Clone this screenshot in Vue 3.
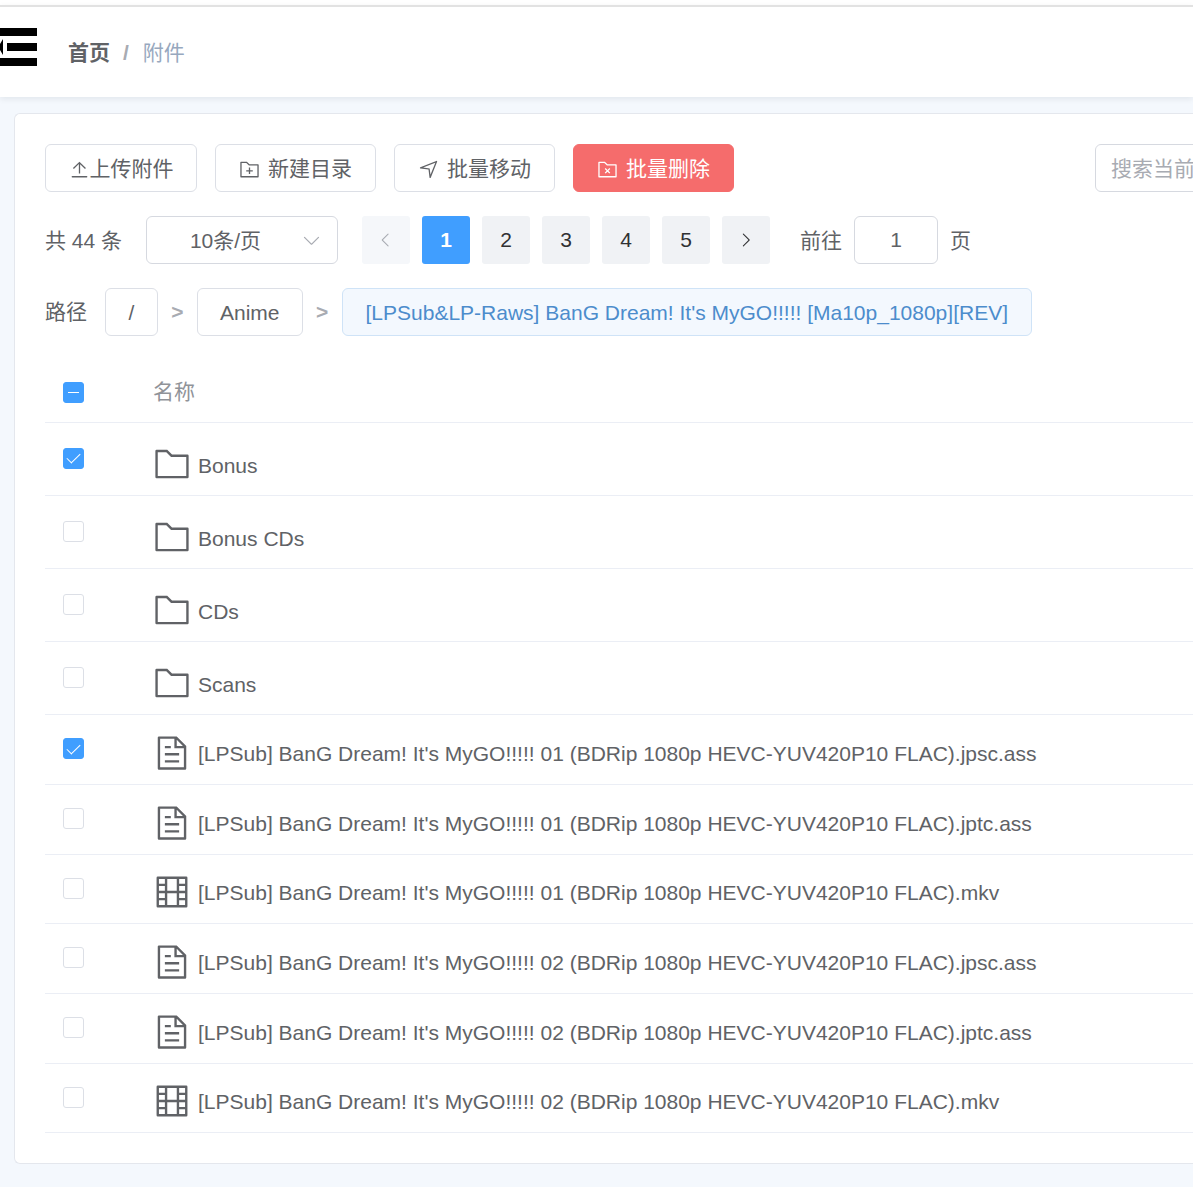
<script setup>
import { ref, computed } from 'vue'

const folder = 'M128 192v640h768V320H485.76L357.504 192zm-32-64h287.872l128.384 128H928a32 32 0 0 1 32 32v576a32 32 0 0 1-32 32H96a32 32 0 0 1-32-32V160a32 32 0 0 1 32-32'
const icons = {
  folder,
  folderAdd: folder + 'm384 416V416h64v128h128v64H544v128h-64V608H352v-64z',
  folderDelete: folder + 'm370.752 448-90.496-90.496 45.248-45.248L512 530.752l90.496-90.496 45.248 45.248L557.248 576l90.496 90.496-45.248 45.248L512 621.248l-90.496 90.496-45.248-45.248z',
  document: 'M832 384H576V128H192v768h640zm-26.496-64L640 154.496V320zM160 64h480l256 256v608a32 32 0 0 1-32 32H160a32 32 0 0 1-32-32V96a32 32 0 0 1 32-32m160 448h384v64H320zm0-192h160v64H320zm0 384h384v64H320z',
  film: 'M160 160v704h704V160zm-32-64h768a32 32 0 0 1 32 32v768a32 32 0 0 1-32 32H128a32 32 0 0 1-32-32V128a32 32 0 0 1 32-32M320 288V128h64v352h256V128h64v160h160v64H704v128h160v64H704v128h160v64H704v160h-64V544H384v352h-64V736H128v-64h192V544H128v-64h192V352H128v-64z',
  upload: 'M160 832h704a32 32 0 1 1 0 64H160a32 32 0 1 1 0-64m384-578.304V704h-64V247.296L237.248 490.048 192 444.8 508.8 128l316.8 316.8-45.312 45.248z',
  position: 'm249.6 417.088 319.744 43.072 39.168 310.272L845.12 178.88zm-129.024 47.168a32 32 0 0 1-7.68-61.44l777.792-311.04a32 32 0 0 1 41.6 41.6l-310.72 775.68a32 32 0 0 1-61.44-7.808L512 516.992z',
  down: 'M831.872 340.864 512 652.672 192.128 340.864a30.59 30.59 0 0 0-42.752 0 29.12 29.12 0 0 0 0 41.6L489.664 714.24a32 32 0 0 0 44.672 0l340.288-331.712a29.12 29.12 0 0 0 0-41.728 30.59 30.59 0 0 0-42.752 0z',
  left: 'M609.408 149.376 277.76 489.6a32 32 0 0 0 0 44.672l331.648 340.352a29.12 29.12 0 0 0 41.728 0 30.59 30.59 0 0 0 0-42.752L339.264 511.936l311.872-319.872a30.59 30.59 0 0 0 0-42.688 29.12 29.12 0 0 0-41.728 0z',
  right: 'M340.864 149.312a30.59 30.59 0 0 0 0 42.752L652.736 512 340.864 831.872a30.59 30.59 0 0 0 0 42.752 29.12 29.12 0 0 0 41.728 0L714.24 534.336a32 32 0 0 0 0-44.672L382.592 149.376a29.12 29.12 0 0 0-41.728 0z',
}

const page = ref(1)
const show = "[LPSub] BanG Dream! It's MyGO!!!!! "
const spec = ' (BDRip 1080p HEVC-YUV420P10 FLAC)'
const rows = ref([
  { name: 'Bonus', type: 'folder', checked: true },
  { name: 'Bonus CDs', type: 'folder', checked: false },
  { name: 'CDs', type: 'folder', checked: false },
  { name: 'Scans', type: 'folder', checked: false },
  { name: show + '01' + spec + '.jpsc.ass', type: 'document', checked: true },
  { name: show + '01' + spec + '.jptc.ass', type: 'document', checked: false },
  { name: show + '01' + spec + '.mkv', type: 'film', checked: false },
  { name: show + '02' + spec + '.jpsc.ass', type: 'document', checked: false },
  { name: show + '02' + spec + '.jptc.ass', type: 'document', checked: false },
  { name: show + '02' + spec + '.mkv', type: 'film', checked: false },
])
const all = computed(() => rows.value.every((r) => r.checked))
const some = computed(() => !all.value && rows.value.some((r) => r.checked))
function toggleAll(e) {
  rows.value.forEach((r) => { r.checked = e.target.checked })
}
</script>

<template>
  <div class="page">
    <header class="topbar">
      <button class="fold" type="button" aria-label="折叠菜单">
        <svg viewBox="0 0 37 38" aria-hidden="true"><path d="M0 0h37v8H0zM7 15h30v8H7zM0 30h37v8H0zM3 11v16L0 22v-6z" /></svg>
      </button>
      <nav class="crumbs">
        <a href="#">首页</a><span class="slash">/</span><span class="here">附件</span>
      </nav>
    </header>

    <main class="card">
      <div class="toolbar">
        <button class="btn tight" type="button"><svg class="icon" viewBox="0 0 1024 1024"><path :d="icons.upload" /></svg>上传附件</button>
        <button class="btn" type="button"><svg class="icon" viewBox="0 0 1024 1024"><path :d="icons.folderAdd" /></svg>新建目录</button>
        <button class="btn" type="button"><svg class="icon" viewBox="0 0 1024 1024"><path :d="icons.position" /></svg>批量移动</button>
        <button class="btn danger" type="button"><svg class="icon" viewBox="0 0 1024 1024"><path :d="icons.folderDelete" /></svg>批量删除</button>
        <div class="search"><input type="text" placeholder="搜索当前目录" aria-label="搜索当前目录"></div>
      </div>

      <div class="pagination">
        <span class="total">共 44 条</span>
        <div class="size">
          <select aria-label="每页条数"><option>10条/页</option></select>
          <svg class="icon" viewBox="0 0 1024 1024"><path :d="icons.down" /></svg>
        </div>
        <div class="pager">
          <button type="button" disabled aria-label="上一页"><svg class="arrow" viewBox="0 0 1024 1024"><path :d="icons.left" /></svg></button>
          <button v-for="n in 5" :key="n" type="button" :class="{ active: n === page }" @click="page = n">{{ n }}</button>
          <button type="button" aria-label="下一页"><svg class="arrow" viewBox="0 0 1024 1024"><path :d="icons.right" /></svg></button>
        </div>
        <label class="jump"><span>前往</span><input v-model.number="page" type="text"><span>页</span></label>
      </div>

      <nav class="path">
        <span class="label">路径</span>
        <button class="btn" type="button">/</button>
        <span class="sep">&gt;</span>
        <button class="btn" type="button">Anime</button>
        <span class="sep">&gt;</span>
        <button class="btn current" type="button">[LPSub&amp;LP-Raws] BanG Dream! It's MyGO!!!!! [Ma10p_1080p][REV]</button>
      </nav>

      <table>
        <thead>
          <tr>
            <th class="pick"><input type="checkbox" aria-label="全选" :checked="all" :indeterminate="some" @change="toggleAll"></th>
            <th>名称</th>
          </tr>
        </thead>
        <tbody>
          <tr v-for="row in rows" :key="row.name" :class="row.type">
            <td class="pick"><input v-model="row.checked" type="checkbox" :aria-label="row.name"></td>
            <td>
              <div class="name">
                <svg viewBox="0 0 1024 1024" aria-hidden="true"><path :d="icons[row.type]" /></svg>
                <span>{{ row.name }}</span>
              </div>
            </td>
          </tr>
        </tbody>
      </table>
    </main>
  </div>
</template>

<style>
body {
  margin: 0;
  background: #f4f8fd;
}
</style>

<style scoped>
* {
  box-sizing: border-box;
}
.page {
  color: #606266;
  font: 21px/32px "Liberation Sans", "Noto Sans CJK SC", sans-serif;
  border-top: 5px solid #fff;
}
button,
input,
select {
  font: inherit;
  color: inherit;
  margin: 0;
}
svg {
  fill: currentColor;
  flex: none;
}
.topbar {
  display: flex;
  align-items: center;
  height: 92px;
  border-top: 2px solid #e2e2e2;
  background: #fff;
  box-shadow: 0 2px 6px rgba(0, 21, 41, 0.08);
}
.fold {
  display: flex;
  padding: 0 0 10px;
  border: 0;
  background: none;
  color: #000;
}
.fold svg {
  width: 37px;
  height: 38px;
}
.crumbs {
  display: flex;
  padding: 2px 0 0 31px;
}
.crumbs a {
  color: #606266;
  font-weight: 700;
  text-decoration: none;
}
.slash {
  margin: 0 14px 0 13px;
  color: #a8abb2;
  font-weight: 700;
}
.here {
  color: #97a8be;
}
.card {
  margin: 16px 0 23px 14px;
  padding: 30px 0 30px 30px;
  border: 1px solid #e4e7ed;
  border-right: 0;
  border-radius: 6px 0 0 6px;
  background: #fff;
}
.toolbar {
  display: flex;
  gap: 18px;
}
.btn {
  display: flex;
  align-items: center;
  justify-content: center;
  gap: 8px;
  height: 48px;
  min-width: 161px;
  padding: 2px 22px 0;
  border: 1px solid #dcdfe6;
  border-radius: 6px;
  background: #fff;
  white-space: nowrap;
}
.icon {
  width: 21px;
  height: 21px;
}
.tight {
  gap: 0;
  min-width: 152px;
}
.danger {
  border-color: #f56c6c;
  background: #f56c6c;
  color: #fff;
}
.search {
  width: 98px;
  margin-left: auto;
  overflow: hidden;
}
.search input {
  width: 300px;
  height: 48px;
  padding: 2px 15px 0;
  border: 1px solid #d6d9e0;
  border-radius: 6px;
  background: #fff;
}
.search input::placeholder {
  color: #a8abb2;
}
.pagination {
  display: flex;
  align-items: center;
  gap: 24px;
  margin-top: 24px;
}
.total,
.jump span {
  padding-top: 1px;
}
.size {
  display: flex;
  align-items: center;
  width: 192px;
  height: 48px;
  padding: 1px 15px 0 3px;
  border: 1px solid #d6d9e0;
  border-radius: 6px;
}
.size select {
  flex: 1;
  height: 44px;
  border: 0;
  appearance: none;
  background: none;
  text-align: center;
}
.size .icon {
  color: #a8abb2;
}
.pager {
  display: flex;
  gap: 12px;
}
.pager button {
  display: flex;
  align-items: center;
  justify-content: center;
  width: 48px;
  height: 48px;
  padding: 0;
  border: 0;
  border-radius: 3px;
  background: #f0f2f5;
  color: #303133;
}
.pager .active {
  background: #409eff;
  color: #fff;
  font-weight: 700;
}
.pager button:disabled {
  background: #f5f7fa;
  color: #a8abb2;
}
.arrow {
  width: 18px;
  height: 18px;
}
.jump {
  display: flex;
  align-items: center;
  gap: 12px;
  padding-left: 6px;
}
.jump input {
  width: 84px;
  height: 48px;
  border: 1px solid #d6d9e0;
  border-radius: 6px;
  text-align: center;
}
.path {
  display: flex;
  align-items: center;
  margin-top: 24px;
}
.path .btn {
  min-width: 53px;
}
.label {
  margin-right: 18px;
}
.sep {
  width: 39px;
  text-align: center;
  color: #a8abb2;
  font-weight: 700;
}
.path .current {
  padding: 2px 23px 0;
  border-color: #cfe3f7;
  background: #f3f8fe;
  color: #4c8ccc;
}
table {
  width: 100%;
  margin-top: 25px;
  border-collapse: separate;
  border-spacing: 0;
}
th,
td {
  height: 70px;
  padding: 0 18px;
  border-bottom: 1px solid #ebeef5;
  text-align: left;
}
th {
  height: 62px;
  color: #909399;
  font-weight: 400;
}
.folder td {
  height: 73px;
}
.film td {
  height: 69px;
}
.pick {
  width: 90px;
}
.pick input {
  display: grid;
  place-items: center;
  width: 21px;
  height: 21px;
  border: 1px solid #dcdfe6;
  border-radius: 3px;
  appearance: none;
  background: #fff;
}
td.pick {
  padding-bottom: 2px;
}
th.pick {
  padding-top: 2px;
}
.pick input:checked,
.pick input:indeterminate {
  border-color: #409eff;
  background: #409eff;
}
.pick input:checked::after {
  content: "";
  width: 6px;
  height: 12px;
  margin: 0 1px 3px 0;
  border: solid #fff;
  border-width: 0 1px 1px 0;
  transform: rotate(45deg);
}
.pick input:indeterminate::after {
  content: "";
  width: 11px;
  height: 1px;
  background: #fff;
}
.name {
  display: flex;
  align-items: center;
  gap: 7px;
  padding-top: 6px;
  white-space: nowrap;
}
.name svg {
  width: 38px;
  height: 38px;
}
.name span {
  padding-top: 2px;
}
.folder .name {
  padding-top: 9px;
}
.folder span {
  padding-top: 4px;
}
</style>
